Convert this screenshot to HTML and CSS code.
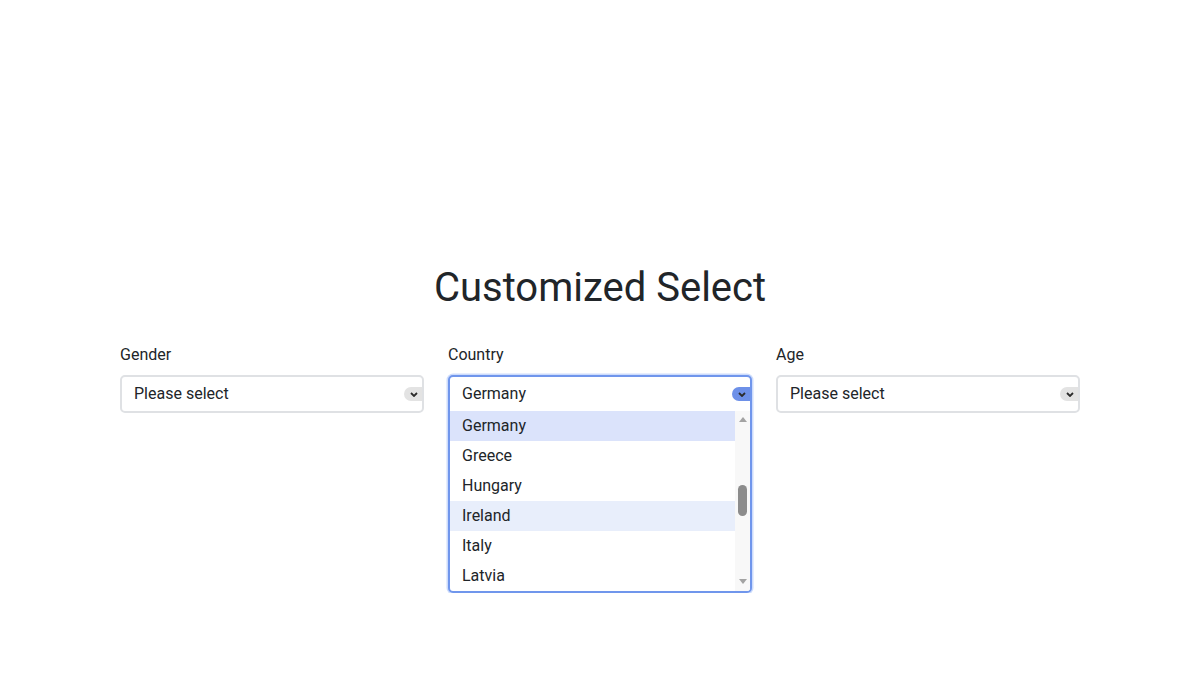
FILE: index.html
```html
<!DOCTYPE html>
<html lang="en">
<head>
<meta charset="utf-8">
<title>Customized Select</title>
<link rel="stylesheet" href="styles.css">
</head>
<body>
<main class="page">
  <h1 class="title">Customized Select</h1>
  <div class="fields">
    <div class="field">
      <div class="label">Gender</div>
      <div class="select">
        <div class="select-row">
          <span class="value">Please select</span>
          <span class="badge"><svg width="8" height="5" viewBox="0 0 8 5"><path d="M1 1 L4 4 L7 1" fill="none" stroke="#2b2b2b" stroke-width="1.8"/></svg></span>
        </div>
      </div>
    </div>
    <div class="field">
      <div class="label">Country</div>
      <div class="select open">
        <div class="select-row">
          <span class="value">Germany</span>
          <span class="badge"><svg width="8" height="5" viewBox="0 0 8 5"><path d="M1 1 L4 4 L7 1" fill="none" stroke="#2b2b2b" stroke-width="1.8"/></svg></span>
        </div>
        <div class="list">
          <ul class="options">
            <li class="option selected">Germany</li>
            <li class="option">Greece</li>
            <li class="option">Hungary</li>
            <li class="option hover">Ireland</li>
            <li class="option">Italy</li>
            <li class="option">Latvia</li>
          </ul>
          <div class="scrollbar">
            <span class="arrow up"></span>
            <span class="track"><span class="thumb"></span></span>
            <span class="arrow down"></span>
          </div>
        </div>
      </div>
    </div>
    <div class="field">
      <div class="label">Age</div>
      <div class="select">
        <div class="select-row">
          <span class="value">Please select</span>
          <span class="badge"><svg width="8" height="5" viewBox="0 0 8 5"><path d="M1 1 L4 4 L7 1" fill="none" stroke="#2b2b2b" stroke-width="1.8"/></svg></span>
        </div>
      </div>
    </div>
  </div>
</main>
</body>
</html>
```
FILE: styles.css
```css
html, body {
  margin: 0;
  padding: 0;
  background: #ffffff;
}
body {
  font-family: Roboto, "Liberation Sans", Arial, sans-serif;
  color: #212529;
  font-size: 16px;
}
.page {
  width: 960px;
  margin: 0 auto;
  padding-top: 264px;
}
.title {
  margin: 0;
  font-size: 40px;
  line-height: 48px;
  font-weight: 400;
  text-align: center;
  color: #212529;
}
.fields {
  margin-top: 31px;
  display: grid;
  grid-template-columns: repeat(3, 304px);
  column-gap: 24px;
  align-items: start;
}
.label {
  line-height: 24px;
  margin-bottom: 8px;
}
.select {
  border: 2px solid #dfe1e4;
  border-radius: 5px;
  overflow: hidden;
  background: #fff;
}
.select.open {
  border-color: #7096ec;
  box-shadow: 0 0 0 1.5px #cddcfc;
}
.select-row {
  height: 34px;
  display: flex;
  align-items: center;
  justify-content: space-between;
  padding-left: 12px;
}
.value {
  line-height: 20px;
}
.badge {
  width: 18px;
  height: 14px;
  border-radius: 7px 0 0 7px;
  background: #e3e3e3;
  display: flex;
  align-items: center;
  justify-content: center;
  padding-left: 1px;
  box-sizing: border-box;
}
.open .badge {
  background: #6d90e8;
}
.list {
  display: flex;
  height: 180px;
}
.options {
  list-style: none;
  margin: 0;
  padding: 0;
  flex: 1;
}
.option {
  height: 30px;
  line-height: 30px;
  padding-left: 12px;
}
.option.selected {
  background: #dbe3fb;
}
.option.hover {
  background: #e8eefb;
}
.scrollbar {
  width: 15px;
  background: #f8f8f8;
  display: flex;
  flex-direction: column;
  align-items: center;
}
.arrow {
  width: 0;
  height: 0;
  border-left: 4.5px solid transparent;
  border-right: 4.5px solid transparent;
}
.arrow.up {
  border-bottom: 5px solid #a3a3a3;
  margin-top: 6px;
}
.arrow.down {
  border-top: 5px solid #a3a3a3;
  margin-bottom: 7px;
}
.track {
  flex: 1;
  width: 100%;
  display: flex;
  justify-content: center;
  padding-top: 63px;
  box-sizing: border-box;
}
.thumb {
  width: 9px;
  height: 31px;
  border-radius: 5px;
  background: #8c8c8c;
}
```
